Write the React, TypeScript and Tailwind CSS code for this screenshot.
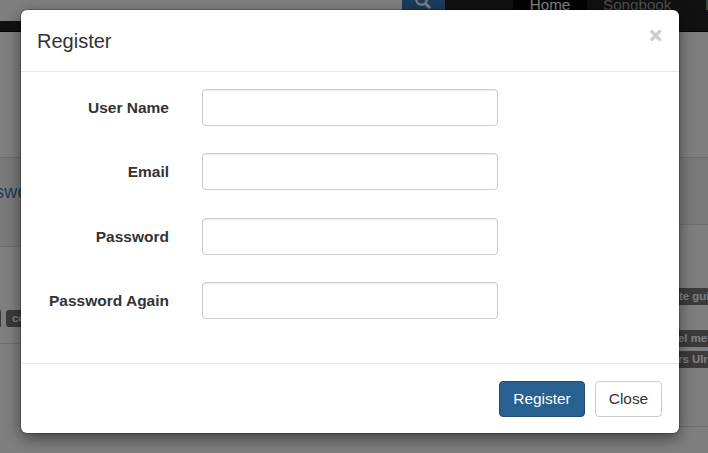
import React from "react";

const fields = [
  { id: "username", label: "User Name", type: "text", gap: "mb-[27px]" },
  { id: "email", label: "Email", type: "email", gap: "mb-[28px]" },
  { id: "password", label: "Password", type: "password", gap: "mb-[27px]" },
  { id: "again", label: "Password Again", type: "password", gap: "" },
];

function Tag({ children, className = "" }: { children?: React.ReactNode; className?: string }) {
  return (
    <span className={`block h-[17px] shrink-0 whitespace-nowrap rounded-[3px] bg-[#777] text-[11.4px] leading-[17px] font-bold text-white ${className}`}>
      {children}
    </span>
  );
}

function Backdrop() {
  return (
    <div className="flex h-full w-full flex-col bg-white">
      <header className="flex h-[32px] shrink-0 overflow-hidden border-b border-[#080808] bg-[#222]">
        <div className="h-[21px] w-[402px] shrink-0 bg-white" />
        <div className="flex h-[21px] w-[43px] shrink-0 justify-center bg-[#337ab7] pr-[2px]">
          <svg viewBox="0 0 16 16" className="-mt-[7px] h-4 w-4" fill="none" stroke="white" strokeWidth="2.3">
            <circle cx="6.5" cy="6.5" r="5.2" />
            <path d="M10.5 10.5 15 15" strokeWidth="3" />
          </svg>
        </div>
        <nav className="ml-[68px] flex shrink-0 text-[15.2px] leading-[21px]">
          <span className="h-[31px] w-[74px] bg-[#080808] text-center text-white">
            <span className="-mt-[6px] block">Home</span>
          </span>
          <span className="-mt-[6px] w-[118px] pl-[16px] text-[#9d9d9d]">Songbook</span>
          <span className="-mt-[6px] text-[#9d9d9d]">L</span>
        </nav>
      </header>
      <div className="flex flex-1">
        <section className="w-[350px] shrink-0 pt-[125px]">
          <div className="h-[89px] border-t border-[#ddd] bg-[#f5f5f5]">
            <div className="-ml-[5px] pt-[23px] text-[18px] leading-[22px] tracking-[0.3px] text-[#337ab7]">sword</div>
          </div>
          <div className="flex h-[97px] gap-[5px] border-t border-[#ddd] pt-[63px]">
            <Tag className="w-[1px]" />
            <Tag className="w-[60px] pl-[6px]">cover</Tag>
          </div>
          <div className="border-t border-[#ddd]" />
        </section>
        <section className="w-[358px] shrink-0 overflow-hidden pt-[125px]">
          <div className="h-[67px] border-t border-[#ddd] bg-[#f5f5f5]" />
          <div className="flex h-[202px] flex-col items-start border-t border-[#ddd] pt-[63px] pl-[320px]">
            <Tag className="mb-[25px] w-[70px] pl-[9px]">te guitar</Tag>
            <Tag className="mb-[4px] w-[70px] pl-[8px]">el metal</Tag>
            <Tag className="w-[70px] pl-[8px]">rs Ulrich</Tag>
          </div>
          <div className="border-t border-[#ddd]" />
        </section>
      </div>
    </div>
  );
}

export default function App() {
  return (
    <main className="relative h-[453px] w-[708px] overflow-hidden font-['Liberation_Sans',Arial,sans-serif] text-[15px] text-[#333]">
      <Backdrop />
      <div className="absolute inset-0 bg-black/50" />
      <div
        role="dialog"
        className="absolute top-[10px] left-[21px] flex h-[423px] w-[658px] flex-col rounded-[6px] bg-white shadow-[0_0_0_1px_rgba(0,0,0,0.2),0_5px_16px_rgba(0,0,0,0.5)]"
      >
        <div className="flex h-[62px] shrink-0 justify-between border-b border-[#e5e5e5] pt-[16px] pr-[17px] pl-[16px]">
          <h4 className="text-[20px] leading-[30px]">Register</h4>
          <button className="h-[20px] text-[22px] leading-[18px] font-bold text-[#ccc] [-webkit-text-stroke:0.6px_#ccc]">×</button>
        </div>
        <form className="h-[291px] shrink-0 pt-[17px]">
          {fields.map((f) => (
            <div key={f.id} className={`flex h-[37px] ${f.gap}`}>
              <label htmlFor={f.id} className="mr-[33px] w-[148px] text-right text-[15.5px] leading-[37px] font-bold">
                {f.label}
              </label>
              <input
                id={f.id}
                type={f.type}
                className="h-[37px] w-[296px] rounded-[4px] border border-[#ccc] bg-white px-3 shadow-[inset_0_1px_1px_rgba(0,0,0,0.075)] outline-none"
              />
            </div>
          ))}
        </form>
        <div className="flex flex-1 justify-end gap-[10px] border-t border-[#e5e5e5] pt-[17px] pr-[17px] text-[15.4px]">
          <button className="h-[36px] w-[86px] rounded-[4px] border border-[#204d74] bg-[#286090] text-white">Register</button>
          <button className="h-[36px] w-[67px] rounded-[4px] border border-[#ccc] bg-white">Close</button>
        </div>
      </div>
    </main>
  );
}
